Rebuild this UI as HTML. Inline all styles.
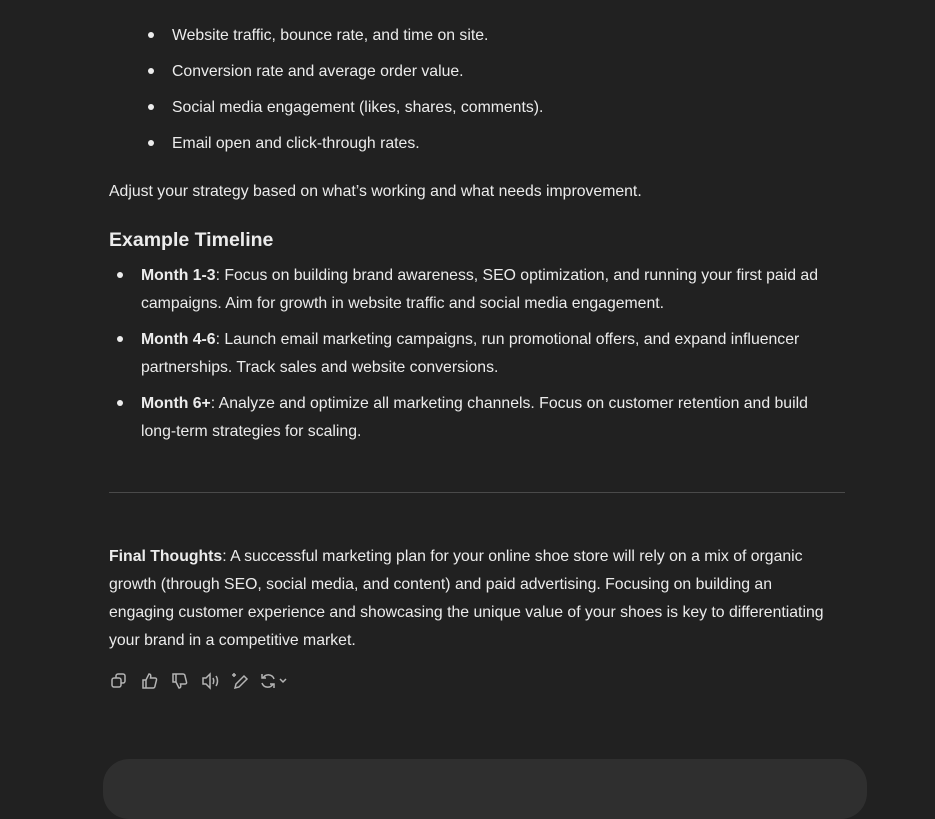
<!DOCTYPE html>
<html><head><style>
body{margin:0;width:935px;height:773px;background:#212121;overflow:hidden;font-family:"Liberation Sans",sans-serif;color:#ececec;font-size:15.8px;position:relative}
.l{position:absolute;white-space:nowrap;line-height:20px}
.d{position:absolute;width:6px;height:6px;border-radius:50%;background:#ececec}
b{font-weight:bold}
svg{position:absolute;top:672px}
</style></head><body>
<div class="d" style="left:148px;top:32px"></div><div class="l" style="left:172px;top:26px">Website traffic, bounce rate, and time on site.</div>
<div class="d" style="left:148px;top:68px"></div><div class="l" style="left:172px;top:62px">Conversion rate and average order value.</div>
<div class="d" style="left:148px;top:104px"></div><div class="l" style="left:172px;top:98px">Social media engagement (likes, shares, comments).</div>
<div class="d" style="left:148px;top:140px"></div><div class="l" style="left:172px;top:134px">Email open and click-through rates.</div>
<div class="l" style="left:109px;top:182px">Adjust your strategy based on what’s working and what needs improvement.</div>
<div class="l" style="left:109px;top:228px;font-size:19.5px;font-weight:bold;line-height:24px">Example Timeline</div>
<div class="d" style="left:117px;top:272px"></div><div class="l" style="left:141px;top:266px"><b>Month 1-3</b>: Focus on building brand awareness, SEO optimization, and running your first paid ad</div>
<div class="l" style="left:141px;top:294px">campaigns. Aim for growth in website traffic and social media engagement.</div>
<div class="d" style="left:117px;top:336px"></div><div class="l" style="left:141px;top:330px"><b>Month 4-6</b>: Launch email marketing campaigns, run promotional offers, and expand influencer</div>
<div class="l" style="left:141px;top:358px">partnerships. Track sales and website conversions.</div>
<div class="d" style="left:117px;top:400px"></div><div class="l" style="left:141px;top:394px"><b>Month 6+</b>: Analyze and optimize all marketing channels. Focus on customer retention and build</div>
<div class="l" style="left:141px;top:422px">long-term strategies for scaling.</div>
<div style="position:absolute;left:109px;top:492px;width:736px;height:1px;background:#4a4a4a"></div>
<div class="l" style="left:109px;top:547px"><b>Final Thoughts</b>: A successful marketing plan for your online shoe store will rely on a mix of organic</div>
<div class="l" style="left:109px;top:575px">growth (through SEO, social media, and content) and paid advertising. Focusing on building an</div>
<div class="l" style="left:109px;top:603px">engaging customer experience and showcasing the unique value of your shoes is key to differentiating</div>
<div class="l" style="left:109px;top:631px">your brand in a competitive market.</div>
<svg style="left:110px" width="18" height="18" fill="none" stroke="#b4b4b4" stroke-width="1.5"><rect x="2" y="6" width="9" height="9" rx="2"/><path d="M6 6V4a2 2 0 0 1 2-2h5a2 2 0 0 1 2 2v5a2 2 0 0 1-2 2h-2"/></svg>
<svg style="left:141px" width="18" height="18" fill="none" stroke="#b4b4b4" stroke-width="1.5"><path d="M2 8h3v8H2zM5 8l3-6c2 0 2 2 1.5 4H14a1.5 1.5 0 0 1 1.5 2l-1.5 6a2 2 0 0 1-2 2H5"/></svg>
<svg style="left:171px" width="18" height="18" fill="none" stroke="#b4b4b4" stroke-width="1.5"><path d="M2 2h3v8H2zM5 10l3 6c2 0 2-2 1.5-4H14a1.5 1.5 0 0 0 1.5-2L14 4a2 2 0 0 0-2-2H5"/></svg>
<svg style="left:201px" width="18" height="18" fill="none" stroke="#b4b4b4" stroke-width="1.5"><path d="M2 6h3l4-4v14l-4-4H2zM12 6c1 2 1 4 0 6M15 4c2 3 2 7 0 10"/></svg>
<svg style="left:231px" width="18" height="18" fill="none" stroke="#b4b4b4" stroke-width="1.5"><path d="M4 16l1-4 8-8 3 3-8 8zM3 1v4M1 3h4"/></svg>
<svg style="left:260px" width="30" height="18" fill="none" stroke="#b4b4b4" stroke-width="1.5"><path d="M14 7a6 6 0 0 0-11-1M2 2v4h4M2 11a6 6 0 0 0 11 1M14 16v-4h-4M20 7l3 3 3-3"/></svg>
<div style="position:absolute;left:103px;top:759px;width:764px;height:60px;border-radius:26px;background:#2f2f2f"></div>
</body></html>
